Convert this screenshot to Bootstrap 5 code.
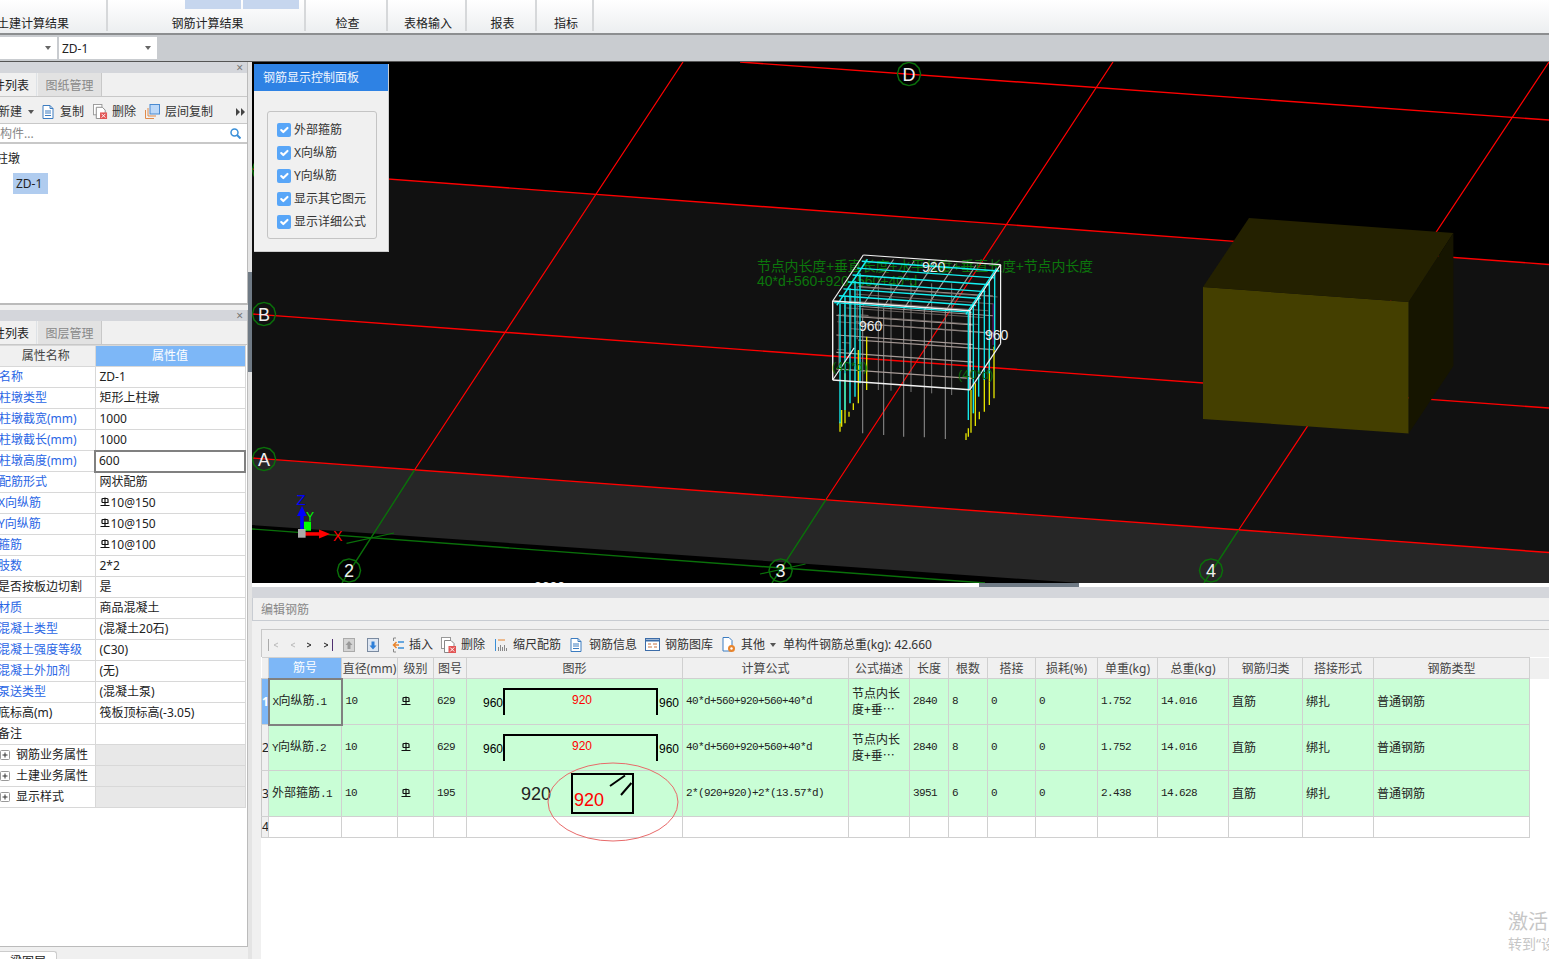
<!DOCTYPE html>
<html lang="zh">
<head>
<meta charset="utf-8">
<title>钢筋三维</title>
<link href="https://cdn.jsdelivr.net/npm/bootstrap@5.3.0/dist/css/bootstrap.min.css" rel="stylesheet">
<style>
html,body{height:100%;margin:0;overflow:hidden}
body{font:12px/16px "Noto Sans","Noto Sans CJK SC",sans-serif;color:#222;background:#f0f0f0}
.app{width:1549px;height:959px}
.ribbon{height:35px;background:linear-gradient(#fff,#eceef0);border-bottom:2px solid #8c8e90;flex:none}
.rb-g{height:31px;border-right:2px solid #d6d8da;position:relative;text-align:center;padding-left:3px}
.rb-l{position:absolute;left:3px;right:0;top:16px}
.w1{width:108px}.w2{width:198px}.w3{width:82px}.w4{width:79px}.w5{width:70px}.w6{width:57px}
.w1 .rb-l{text-align:left;left:-3px}
.rb-tabs{gap:2px;margin-left:74px}
.rb-tabs i{display:block;width:56px;height:9px;background:#c6d6ee}
.selbar{height:27px;background:#c9ccd0;border-bottom:1px solid #555;flex:none;gap:2px;padding-top:2px}
.fake-sel{height:22px;background:#fff;line-height:23px;padding-left:3px;position:relative}
.fake-sel::after{content:"";position:absolute;right:6px;top:9px;border:3px solid transparent;border-top:4px solid #666;border-bottom:0}
.s1{width:57px}.s2{width:98px}
.main{flex:1;min-height:0}
.leftpane{width:248px;flex:none;background:#f0f0f0;overflow:hidden}
.pane{border-right:1px solid #bbb;background:#fff;overflow:hidden}
.pane-a{height:243px;border-bottom:2px solid #bbb}
.pane-b{height:637px;margin-top:5px;border-bottom:1px solid #bbb}
.pane-head{height:11px;background:#d4d6db;position:relative;flex:none}
.pane-x{position:absolute;right:4px;top:0;font-size:12px;line-height:11px;color:#777}
.pane-tabs.nav-tabs{height:24px;background:#f0f0f0;border-bottom:1px solid #c8c8c8;flex-wrap:nowrap;--bs-nav-tabs-border-radius:0;--bs-nav-tabs-border-width:0}
.pane-tabs .nav-link{height:23px;padding:5px 0 0;font-size:12px;line-height:16px;color:#888;border:0;border-right:1px solid #c8c8c8;width:64px;text-align:center;background:#e2e2e2;margin:0}
.pane-tabs .nav-link.active{width:37px;background:#f0f0f0;color:#222;white-space:nowrap;text-indent:-19px;text-align:left;overflow:hidden;margin-right:1px}
.ltb{height:27px;background:#f0f0f0;border-bottom:1px solid #c8c8c8;flex:none;white-space:nowrap;color:#333;padding-top:3px}
.ltb svg{flex:none}
.lsearch{height:20px;border-bottom:2px solid #c8c8c8;color:#888;text-indent:-24px;padding:1px 6px 0 0;line-height:17px;flex:none}
.tree{padding-top:6px}
.tree-r{text-indent:-4px;height:21px;line-height:18px}
.tree-sel{margin-left:13px;width:35px;height:21px;background:#b0ccef;line-height:21px;padding-left:3px;margin-top:2px}
.caret-d{display:inline-block;border:3px solid transparent;border-top:4px solid #555;border-bottom:0}
.gd{table-layout:fixed;width:245px;margin:0;border-collapse:collapse;font-size:12px}
.gd td,.gd th{height:21px;padding:0 0 0 4px;border:1px solid #d8d8d8;border-left:0;font-weight:400;line-height:16px;white-space:nowrap;overflow:hidden;vertical-align:middle;background:#fff;color:#222}
.gd th{background:#f0f0f0;text-align:center;color:#444;padding:0}
.gd th.nm-h{padding-right:3px}
.gd th.on,.gt th.on{background:#7db7f7;color:#fff}
.gd .k{color:#2a66e5;padding-left:0;text-indent:-1px}
.gd .d{padding-left:0;text-indent:-2px}
.gd .g{background:#e8e8e8}
.gd .fx{border:2px solid #808080;padding-left:3px}
.cg1{width:95px}.cg2{width:150px}
.plus{vertical-align:-1px;margin-right:6px}
.sym{width:10px;height:10px;vertical-align:0;margin-right:1px}
.lfoot{height:12px;padding-top:4px;overflow:hidden}
.lfoot div{width:58px;height:12px;background:#fff;border:1px solid #ccc;border-bottom:0;border-radius:0 3px 0 0;text-align:center;line-height:20px;margin-left:-1px}
.splitter{width:4px;flex:none;background:#e4e4e4;position:relative}
.splitter div{margin-top:210px;height:100px;background:#6f7a85}
.rightpane{flex:1;min-width:0;position:relative;overflow:hidden;background:#fff}
.view{height:521px;position:relative;background:#000;flex:none}
.ctl{position:absolute;left:2px;top:2px;width:135px;height:188px;background:#f0f0f0;border:0 solid #ccc;border-width:0 1px 1px 0}
.ctl-h{height:27px;background:#2e82e4;color:#f1f6ff;padding:6px 0 0 9px}
.ctl-b{margin:20px 11px 0 13px;height:128px;border:1px solid #c4c4c4;border-radius:3px;padding:6px 0 0 9px}
.ctl .form-check{margin:0;padding:0;height:23px;display:flex;align-items:center;gap:3px;min-height:0;color:#333;white-space:nowrap}
.ctl .form-check-input{float:none;margin:0;width:14px;height:14px;background-color:#58a6f8;border:0;border-radius:2px;opacity:1;flex:none}
.ctl .form-check-label{opacity:1}
.scrollx{height:4px;background:#fff;flex:none}
.scrollx div{margin-left:727px;width:100px;height:4px;background:#6f7a85}
.strip{height:11px;background:#d4d6db;flex:none}
.edit-t{height:23px;background:#f0f0f0;border:0 solid #c8ccd2;border-width:0 0 1px 1px;color:#888;padding:4px 0 0 8px;flex:none}
.edit-b{flex:1;min-height:0;background:#f0f0f0;padding:8px 0 0 9px}
.sheet{position:relative;background:#fff;height:100%;border-top:1px solid #c8c8c8}
.btb{height:27px;background:#f0f0f0;white-space:nowrap;color:#333;padding:2px 0 0 6px;border-left:1px solid #c8c8c8}
.btb svg{flex:none}
.m5{margin-left:5px}.m4{margin-left:4px}.m6{margin-left:6px}.m7{margin-left:7px}.m8{margin-left:8px}.m9{margin-left:9px}.m10{margin-left:10px}.m12{margin-left:12px}.m13{margin-left:13px}.m22{margin-left:22px}
.gt{table-layout:fixed;width:1287px;margin:0;border-collapse:collapse;font-size:12px}
.gt td,.gt th{padding:0 3px;border:1px solid #d0d0d0;border-left-width:0;font-weight:400;line-height:16px;vertical-align:middle;overflow:hidden;white-space:nowrap;color:#222}
.gt th{height:21px;background:#f0f0f0;text-align:center;color:#444;padding:1px 0 0}
.gt tr.hi{height:46px}.gt tr.lo{height:21px}
.gt tr.hi td{background:#c9fed6}
.gt tr.hi td.nm{padding-bottom:2px}
.gt .rh{background:#f0f0f0!important;padding:0;text-align:center;font-size:12px;border-left:1px solid #c8c8c8}
.gt .rh.on{background:#7db7f7!important;color:#fff;font-weight:700}
.gt .fx{border:2px solid #808080}
.gt .wr{white-space:normal;line-height:16px;padding-right:0}
.gt .ex{border:0!important;background:#fff!important}
.gt th.ex{background:#f0f0f0!important}
.nm{font:11px/16px "Liberation Mono",monospace;letter-spacing:-.6px}
.c0{width:7px}.c1{width:73px}.c2{width:56px}.c3{width:36px}.c4{width:33px}.c5{width:216px}.c6{width:166px}.c7{width:61px}.c8{width:39px}.c9{width:39px}.c10{width:48px}.c11{width:62px}.c12{width:60px}.c13{width:71px}.c14{width:74px}.c15{width:71px}.c16{width:156px}.c17{width:19px}
.fig{padding:0!important;position:relative}
.fig svg{display:block}
.oval{position:absolute;left:286px;top:132px;pointer-events:none}
.wm{position:absolute;left:1256px;top:850px;color:#c6c6c6;white-space:nowrap;line-height:1}
.wm b{display:block;font-weight:400;font-size:20px;margin-bottom:5px}
.wm span{font-size:14px}
</style>
</head>
<body>
<svg width="0" height="0" class="position-absolute"><defs>
<symbol id="gj" viewBox="0 0 10 10"><path d="M2 5.500V2.500Q2 1.500 3 1.500H7Q8 1.500 8 2.500V5.500H2M5 .5V8.500M.5 8.500H9.500" fill="none" stroke="#111" stroke-width="1.200"/></symbol>
<symbol id="pl" viewBox="0 0 10 10"><rect x=".5" y=".5" width="9" height="9" rx="1" fill="#fff" stroke="#999"/><path d="M2.500 5h5M5 2.500v5" stroke="#333"/></symbol>
<symbol id="doc" viewBox="0 0 12 14"><path d="M1 .5H8L11 3.500V13.500H1Z" fill="#fff" stroke="#3c7cc0"/><path d="M8 .5V3.500H11M3 6h6M3 8h6M3 10.500h6" fill="none" stroke="#3c7cc0"/></symbol>
<symbol id="del" viewBox="0 0 16 16"><rect x=".5" y=".5" width="9" height="11" fill="#fff" stroke="#999"/><path d="M3.500 3.500H10L13 6.500V15.500H3.500Z" fill="#fff" stroke="#888"/><rect x="7.500" y="9" width="7.500" height="7" fill="#e25555"/><path d="M9.200 10.500l4 4M13.200 10.500l-4 4" stroke="#fff"/></symbol>
<polygon id="ax" points="11.600,0 10,5.800 5.800,10 0,11.600 -5.800,10 -10,5.800 -11.600,0 -10,-5.800 -5.800,-10 0,-11.600 5.800,-10 10,-5.800" fill="none" stroke="#0a700a" stroke-width="1.400"/>
</defs></svg>

<div class="app d-flex flex-column">
  <div class="ribbon d-flex">
    <div class="rb-g w1"><span class="rb-l">土建计算结果</span></div>
    <div class="rb-g w2"><div class="rb-tabs d-flex"><i></i><i></i></div><span class="rb-l">钢筋计算结果</span></div>
    <div class="rb-g w3"><span class="rb-l">检查</span></div>
    <div class="rb-g w4"><span class="rb-l">表格输入</span></div>
    <div class="rb-g w5"><span class="rb-l">报表</span></div>
    <div class="rb-g w6"><span class="rb-l">指标</span></div>
  </div>
  <div class="selbar d-flex">
    <div class="fake-sel s1"></div>
    <div class="fake-sel s2">ZD-1</div>
  </div>

  <div class="main d-flex">
    <div class="leftpane d-flex flex-column">
      <div class="pane pane-a d-flex flex-column">
        <div class="pane-head"><span class="pane-x">×</span></div>
        <ul class="nav nav-tabs pane-tabs">
          <li class="nav-item"><a class="nav-link active">构件列表</a></li>
          <li class="nav-item"><a class="nav-link">图纸管理</a></li>
        </ul>
        <div class="ltb d-flex align-items-center">
          <span class="d-inline-block" style="margin-left:-2px">新建</span>
          <span class="caret-d m6"></span>
          <svg class="m8" width="12" height="14"><use href="#doc"/></svg><span class="m6">复制</span>
          <svg class="m9" width="15" height="15"><use href="#del"/></svg><span class="m4">删除</span>
          <svg class="m9" width="15" height="15" viewBox="0 0 15 15"><path d="M.5 6v8.500H9M3 4v8h8" fill="none" stroke="#e08a4a"/><rect x="5" y=".5" width="9.500" height="9.500" fill="#bcd8f8" stroke="#4a8ad0"/></svg><span class="m5">层间复制</span>
          <svg class="m22" width="10" height="8" viewBox="0 0 10 8"><path d="M1 0l4 4-4 4zM6 0l4 4-4 4z" fill="#444"/></svg>
        </div>
        <div class="lsearch d-flex justify-content-between align-items-center">
          <span>查找构件...</span>
          <svg width="11" height="11" viewBox="0 0 11 11"><circle cx="4.500" cy="4.500" r="3.500" fill="none" stroke="#3a8fd8" stroke-width="1.500"/><path d="M7 7l3.500 3.500" stroke="#3a8fd8" stroke-width="2"/></svg>
        </div>
        <div class="tree">
          <div class="tree-r">柱墩</div>
          <div class="tree-sel">ZD-1</div>
        </div>
      </div>
      <div class="pane pane-b d-flex flex-column">
        <div class="pane-head"><span class="pane-x">×</span></div>
        <ul class="nav nav-tabs pane-tabs">
          <li class="nav-item"><a class="nav-link active">属性列表</a></li>
          <li class="nav-item"><a class="nav-link">图层管理</a></li>
        </ul>
        <table class="gd">
          <colgroup><col class="cg1"><col class="cg2"></colgroup>
          <tr><th class="nm-h">属性名称</th><th class="on">属性值</th></tr>
          <tr><td class="k">名称</td><td>ZD-1</td></tr>
          <tr><td class="k">柱墩类型</td><td>矩形上柱墩</td></tr>
          <tr><td class="k">柱墩截宽(mm)</td><td>1000</td></tr>
          <tr><td class="k">柱墩截长(mm)</td><td>1000</td></tr>
          <tr><td class="k">柱墩高度(mm)</td><td class="fx">600</td></tr>
          <tr><td class="k">配筋形式</td><td>网状配筋</td></tr>
          <tr><td class="k d">X向纵筋</td><td><svg class="sym"><use href="#gj"/></svg>10@150</td></tr>
          <tr><td class="k d">Y向纵筋</td><td><svg class="sym"><use href="#gj"/></svg>10@150</td></tr>
          <tr><td class="k d">箍筋</td><td><svg class="sym"><use href="#gj"/></svg>10@100</td></tr>
          <tr><td class="k d">肢数</td><td>2*2</td></tr>
          <tr><td class="d">是否按板边切割</td><td>是</td></tr>
          <tr><td class="k d">材质</td><td>商品混凝土</td></tr>
          <tr><td class="k d">混凝土类型</td><td>(混凝土20石)</td></tr>
          <tr><td class="k d">混凝土强度等级</td><td>(C30)</td></tr>
          <tr><td class="k d">混凝土外加剂</td><td>(无)</td></tr>
          <tr><td class="k d">泵送类型</td><td>(混凝土泵)</td></tr>
          <tr><td class="d">底标高(m)</td><td>筏板顶标高(-3.05)</td></tr>
          <tr><td class="d">备注</td><td></td></tr>
          <tr><td class="p-0"><svg class="plus" width="10" height="10"><use href="#pl"/></svg>钢筋业务属性</td><td class="g"></td></tr>
          <tr><td class="p-0"><svg class="plus" width="10" height="10"><use href="#pl"/></svg>土建业务属性</td><td class="g"></td></tr>
          <tr><td class="p-0"><svg class="plus" width="10" height="10"><use href="#pl"/></svg>显示样式</td><td class="g"></td></tr>
        </table>
      </div>
      <div class="lfoot"><div>梁图层</div></div>
    </div>
    <div class="splitter"><div></div></div>

    <div class="rightpane d-flex flex-column">
      <div class="view">
        <svg id="scene" class="d-block" width="1297" height="521" viewBox="252 62 1297 521" font-family="'Liberation Sans','Noto Sans CJK SC',sans-serif">
          <polygon points="252,169 1549,264.500 1549,552.500 252,458" fill="#111"/>
          <polygon points="252,458 1549,552.500 1549,583 1080,583 252,525" fill="#262626"/>
          <g fill="none" stroke="#f00" stroke-width="1.400">
            <path d="M740 62 1549 120M252 169 1549 264.500M252 314 1549 408M252 458 1549 552.500"/>
            <path d="M683 62 414.500 470M1113 62 826 499.500M1549 62 1238.600 530" stroke-width="1.200"/>
          </g>
          <g fill="none" stroke="#0a700a" stroke-width="1.400">
            <path d="M252 529 985 583M414.500 470 342 583M826 499.500 772 583M1238.600 530 1204 583"/>
            <path d="M346.500 543.400 394 533M760 574 805.500 564" stroke-width="1.200"/>
          </g>
          <polygon points="1203,287 1408.700,302 1408.700,433.500 1203,419" fill="#443f00"/>
          <polygon points="1203,287 1249,218 1453.400,233 1408.700,302" fill="#242100"/>
          <polygon points="1408.700,302 1453.400,233 1453.400,366 1408.700,433.500" fill="#161500"/>
          <g fill="#0c760c" font-size="14">
            <text x="757" y="271" textLength="336">节点内长度+垂直长度+水平长度+垂直长度+节点内长度</text>
            <text x="757" y="286">40*d+560+920+560+40*d</text>
          </g>
          <g id="cage" fill="none"></g>
          <g fill="#0a6a0a" font-size="13">
            <text x="832" y="371">(40*d)</text>
            <text x="958" y="379">(40*d)</text>
          </g>
          <g fill="#eee" font-size="14">
            <text x="922" y="272">920</text>
            <text x="859" y="331">960</text>
            <text x="985" y="340">960</text>
          </g>
          <text x="534" y="592" fill="#eee" font-size="14">3600</text>
          <use href="#ax" x="264" y="170"/>
          <use href="#ax" x="909" y="74"/>
          <use href="#ax" x="264" y="314"/>
          <use href="#ax" x="264" y="459"/>
          <use href="#ax" x="349" y="570.500"/>
          <use href="#ax" x="780.600" y="570.500"/>
          <use href="#ax" x="1211" y="570.500"/>
          <g fill="#eee" font-size="18" text-anchor="middle">
            <text x="909" y="80.500">D</text>
            <text x="264" y="320.500">B</text>
            <text x="264" y="465.500">A</text>
            <text x="349" y="577">2</text>
            <text x="780.600" y="577">3</text>
            <text x="1211" y="577">4</text>
          </g>
          <g>
            <rect x="304" y="521.700" width="7" height="9" fill="#0f0"/>
            <rect x="300.200" y="515" width="3.500" height="15" fill="#00f"/>
            <polygon points="302,506 297,516 306.700,516" fill="#00f"/>
            <rect x="305" y="532.200" width="15" height="3.500" fill="#f00"/>
            <polygon points="330,534 319,529.500 319,538.500" fill="#f00"/>
            <rect x="298" y="529" width="7.600" height="8.700" fill="#aaa"/>
            <text x="296.500" y="505" fill="#00f" font-size="15">Z</text>
            <text x="306" y="521" fill="#0f0" font-size="12">Y</text>
            <text x="333" y="541" fill="#f00" font-size="14">X</text>
          </g>
        </svg>
        <div class="ctl">
          <div class="ctl-h">钢筋显示控制面板</div>
          <div class="ctl-b">
            <div class="form-check"><input class="form-check-input" type="checkbox" checked id="k1"><label class="form-check-label" for="k1">外部箍筋</label></div>
            <div class="form-check"><input class="form-check-input" type="checkbox" checked id="k2"><label class="form-check-label" for="k2">X向纵筋</label></div>
            <div class="form-check"><input class="form-check-input" type="checkbox" checked id="k3"><label class="form-check-label" for="k3">Y向纵筋</label></div>
            <div class="form-check"><input class="form-check-input" type="checkbox" checked id="k4"><label class="form-check-label" for="k4">显示其它图元</label></div>
            <div class="form-check"><input class="form-check-input" type="checkbox" checked id="k5"><label class="form-check-label" for="k5">显示详细公式</label></div>
          </div>
        </div>
      </div>
      <div class="scrollx"><div></div></div>
      <div class="strip"></div>
      <div class="edit-t">编辑钢筋</div>
      <div class="edit-b">
        <div class="sheet">
          <div class="btb d-flex align-items-center">
            <svg width="65" height="14" viewBox="0 0 65 14" fill="none"><path d="M.5 1V13" stroke="#aaa"/><path d="M10 5 6 7l4 2M27 5l-4 2 4 2" stroke="#bbb"/><path d="M39 5l4 2-4 2M56 5l4 2-4 2" stroke="#222"/><path d="M64.500 1V13" stroke="#503070"/></svg>
            <svg class="m10" width="12" height="14" viewBox="0 0 12 14"><rect width="12" height="14" fill="#d4d4d4"/><rect x=".5" y=".5" width="11" height="13" fill="none" stroke="#aaa"/><path d="M6 3 2.500 7H4.500V11H7.500V7H9.500Z" fill="#999"/></svg>
            <svg class="m12" width="12" height="14" viewBox="0 0 12 14"><rect width="12" height="14" fill="#dde6f2"/><rect x=".5" y=".5" width="11" height="13" fill="none" stroke="#7a8aa0"/><path d="M6 11.500 2.500 7.500H4.500V3.500H7.500V7.500H9.500Z" fill="#2e7fd8"/></svg>
            <svg class="m13" width="12" height="16" viewBox="0 0 12 16" fill="none"><path d="M4 1H1.500V4M4 15H1.500V12" stroke="#888"/><path d="M7 8H2M4.500 5 1.500 8l3 3" stroke="#e8842c" stroke-width="1.500"/><path d="M6 5h6M6 11h6" stroke="#3a8fd8" stroke-width="1.500"/></svg>
            <span class="m5">插入</span>
            <svg class="m8" width="16" height="16"><use href="#del"/></svg><span class="m4">删除</span>
            <svg class="m10" width="12" height="14" viewBox="0 0 12 14" fill="none"><path d="M.5 1v12" stroke="#3a8fd8"/><path d="M3 2h7" stroke="#e8842c"/><path d="M3.500 13V9M5.500 13V7M7.500 13V9M9.500 13V7M11.500 13V10" stroke="#888"/></svg>
            <span class="m6">缩尺配筋</span>
            <svg class="m9" width="12" height="14"><use href="#doc"/></svg><span class="m7">钢筋信息</span>
            <svg class="m8" width="15" height="13" viewBox="0 0 15 13" fill="none"><rect x=".5" y=".5" width="14" height="12" fill="#fff" stroke="#3c6ca8"/><path d="M1 2.500h13" stroke="#3c6ca8" stroke-width="2"/><path d="M3 6h3M8 6h4M3 9h4M9 9h3" stroke="#c87040"/></svg><span class="m5">钢筋图库</span>
            <svg class="m9" width="14" height="16" viewBox="0 0 14 16" fill="none"><path d="M1 .5H7L10 3.500V14H1Z" fill="#fff" stroke="#3c7cc0"/><circle cx="9.500" cy="11.500" r="3.500" fill="#e8842c"/><circle cx="9.500" cy="11.500" r="1.200" fill="#fff"/></svg><span class="m5">其他</span>
            <span class="caret-d m5"></span>
            <span class="m7">单构件钢筋总重(kg): 42.660</span>
          </div>
          <table class="gt">
            <colgroup><col class="c0"><col class="c1"><col class="c2"><col class="c3"><col class="c4"><col class="c5"><col class="c6"><col class="c7"><col class="c8"><col class="c9"><col class="c10"><col class="c11"><col class="c12"><col class="c13"><col class="c14"><col class="c15"><col class="c16"><col class="c17"></colgroup>
            <tr><th></th><th class="on">筋号</th><th>直径(mm)</th><th>级别</th><th>图号</th><th>图形</th><th>计算公式</th><th>公式描述</th><th>长度</th><th>根数</th><th>搭接</th><th>损耗(%)</th><th>单重(kg)</th><th>总重(kg)</th><th>钢筋归类</th><th>搭接形式</th><th>钢筋类型</th><th class="ex"></th></tr>
            <tr class="hi"><td class="rh on">1</td><td class="fx"><span class="nm">X</span>向纵筋<span class="nm">.1</span></td><td class="nm">10</td><td><svg class="sym"><use href="#gj"/></svg></td><td class="nm">629</td>
              <td class="fig"><svg width="215" height="45" viewBox="1 0 215 45" font-family="'Liberation Sans',sans-serif" font-size="12"><path d="M38 36V10H191V36" fill="none" stroke="#000" stroke-width="2"/><text x="17" y="28">960</text><text x="193" y="28">960</text><text x="106" y="25" fill="#f00">920</text></svg></td>
              <td class="nm">40*d+560+920+560+40*d</td><td class="wr">节点内长度+垂⋯</td><td class="nm">2840</td><td class="nm">8</td><td class="nm">0</td><td class="nm">0</td><td class="nm">1.752</td><td class="nm">14.016</td><td>直筋</td><td>绑扎</td><td>普通钢筋</td><td class="ex"></td></tr>
            <tr class="hi"><td class="rh">2</td><td><span class="nm">Y</span>向纵筋<span class="nm">.2</span></td><td class="nm">10</td><td><svg class="sym"><use href="#gj"/></svg></td><td class="nm">629</td>
              <td class="fig"><svg width="215" height="45" viewBox="1 0 215 45" font-family="'Liberation Sans',sans-serif" font-size="12"><path d="M38 36V10H191V36" fill="none" stroke="#000" stroke-width="2"/><text x="17" y="28">960</text><text x="193" y="28">960</text><text x="106" y="25" fill="#f00">920</text></svg></td>
              <td class="nm">40*d+560+920+560+40*d</td><td class="wr">节点内长度+垂⋯</td><td class="nm">2840</td><td class="nm">8</td><td class="nm">0</td><td class="nm">0</td><td class="nm">1.752</td><td class="nm">14.016</td><td>直筋</td><td>绑扎</td><td>普通钢筋</td><td class="ex"></td></tr>
            <tr class="hi"><td class="rh">3</td><td>外部箍筋<span class="nm">.1</span></td><td class="nm">10</td><td><svg class="sym"><use href="#gj"/></svg></td><td class="nm">195</td>
              <td class="fig"><svg width="215" height="45" viewBox="1 0 215 45" font-family="'Liberation Sans',sans-serif"><rect x="106" y="3" width="61" height="39" fill="none" stroke="#000" stroke-width="2"/><path d="M144 15 159 4.500M155 24 165.400 12" stroke="#000" stroke-width="2" fill="none"/><text x="55" y="29" font-size="18" fill="#222">920</text><text x="108" y="35" font-size="18" fill="#f00">920</text></svg></td>
              <td class="nm">2*(920+920)+2*(13.57*d)</td><td></td><td class="nm">3951</td><td class="nm">6</td><td class="nm">0</td><td class="nm">0</td><td class="nm">2.438</td><td class="nm">14.628</td><td>直筋</td><td>绑扎</td><td>普通钢筋</td><td class="ex"></td></tr>
            <tr class="lo"><td class="rh">4</td><td></td><td></td><td></td><td></td><td></td><td></td><td></td><td></td><td></td><td></td><td></td><td></td><td></td><td></td><td></td><td></td><td class="ex"></td></tr>
          </table>
          <svg class="oval" width="132" height="80" viewBox="0 0 132 80"><ellipse cx="66" cy="40" rx="65" ry="39" fill="none" stroke="#e86a6a"/></svg>
        </div>
      </div>
      <div class="wm"><b>激活</b><span>转到“设置”</span></div>
    </div>
  </div>
</div>

<script>
(function(){
  var g=document.getElementById('cage'),NS='http://www.w3.org/2000/svg';
  function ln(a,b,c,d,col,w){var l=document.createElementNS(NS,'line');l.setAttribute('x1',a);l.setAttribute('y1',b);l.setAttribute('x2',c);l.setAttribute('y2',d);l.setAttribute('stroke',col);l.setAttribute('stroke-width',w);g.appendChild(l);}
  function P(u,v,w){return [832.7+137.3*u+30.6*v,301+9.7*u-46*v+79*w];}
  function s(p,q,col,w){ln(p[0],p[1],q[0],q[1],col,w);}
  function z(a,b,c,d,col,w){ln(740+a/3,240+b/3,740+c/3,240+d/3,col,w);}
  var us=[.22,.37,.52,.67,.82];
  /* stubs */
  [[368,580],[431,585],[491,590],[553,592],[616,597]].forEach(function(b){z(b[0],205,b[0],b[1],'#888',1.100);});
  [[415,450],[453,452],[513,456],[575,460],[635,465]].forEach(function(b){z(b[0],130,b[0],b[1],'#777',1);});
  /* purple bar */
  z(760,190,760,315,'#521058',2);
  /* gray mesh */
  [.25,.5,.72,.93].forEach(function(w){s(P(0,.12,w),P(1,.12,w),'#a89c98',1.200);s(P(.02,.75,w),P(1,.75,w),'#a09490',1.100);});
  [.2,.4,.6,.8].forEach(function(v){s(P(0,v,.28),P(0,v,.95),'#8d8480',.8);});
  us.forEach(function(u){s(P(u,0,.03),P(u,1,.03),'#a89c98',1.100);});
  [.15,.3,.45,.6,.75,.9].forEach(function(v){s(P(0,v,.35),P(1,v,.35),'#7a726e',.8);s(P(0,v,.7),P(.06,v,.7),'#8d8480',.8);});
  /* cyan mesh */
  [.05,.2,.35,.5,.65,.8,.95].forEach(function(v){s(P(0,v,.05),P(1,v,.05),'#14f0f2',1.400);});
  [.03,.97].forEach(function(u){s(P(u,0,.05),P(u,1,.05),'#14f0f2',1.400);});
  /* yellow tails */
  [[300,545,575],[305,510,560],[315,400,550],[327,515,530],[340,490,510],[355,330,490],[380,290,450],[678,580,600],[685,565,590],[693,450,578],[706,430,558],[718,515,538],[733,400,515],[748,330,495],[762,320,475]].forEach(function(y){z(y[0],y[1],y[0],y[2],'#e8e800',1.300);});
  /* cyan verticals */
  [[300,192,550],[315,168,510],[330,145,490],[345,122,470],[360,100,430],[685,218,540],[700,195,520],[716,170,470],[733,148,420],[748,125,400],[764,100,330]].forEach(function(y){z(y[0],y[1],y[0],y[2],'#14e8ea',1.400);});
  /* white wire box */
  var W='#f2f2f2';
  s(P(0,0,0),P(1,0,0),W,1.400);s(P(1,0,0),P(1,0,1),W,1.400);s(P(1,0,1),P(0,0,1),W,1.400);s(P(0,0,1),P(0,0,0),W,1.400);
  s(P(0,0,0),P(0,1,0),W,1.200);s(P(0,1,0),P(1,1,0),W,1.200);s(P(1,1,0),P(1,0,0),W,1.200);
  s(P(1,1,0),P(1,1,1),W,1.200);s(P(1,1,1),P(1,0,1),W,1.200);s(P(0,0,1),P(0,.7,1),W,1.200);
})();
</script>
</body>
</html>
